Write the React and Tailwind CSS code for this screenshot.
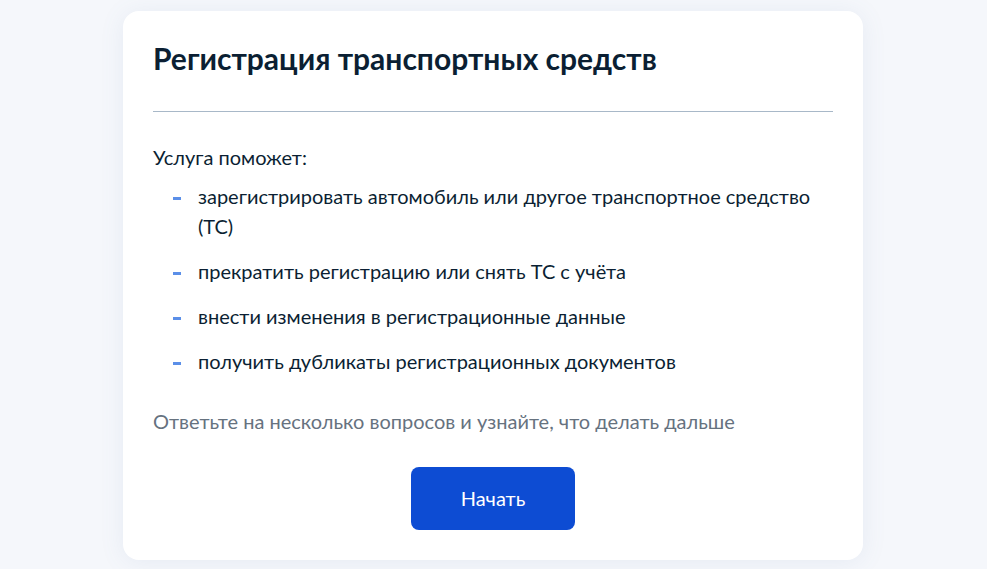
import React from 'react'

const items = [
  'зарегистрировать автомобиль или другое транспортное средство (ТС)',
  'прекратить регистрацию или снять ТС с учёта',
  'внести изменения в регистрационные данные',
  'получить дубликаты регистрационных документов',
]

export default function App(){
  return (
    <div className="min-h-screen bg-[#f5f7fb] pt-[11px] pb-[8px]" style={{ fontFamily: 'Lato, "Noto Sans", sans-serif' }}>
      <div className="ml-[123px] w-[740px] rounded-2xl bg-white px-[30px] pt-[29px] pb-[30px] shadow-[0_2px_24px_rgba(100,130,180,0.10)]">
        <h1 className="text-[30px] leading-[36px] font-bold text-[#0b1f33]">Регистрация транспортных средств</h1>
        <div className="mt-[35px] h-px bg-[#a8b8c8]" />
        <p className="mt-[30px] text-[20px] leading-[30px] text-[#0b1f33]">Услуга поможет:</p>
        <ul className="mt-[9px] flex flex-col gap-[15px]">
          {items.map(t => (
            <li key={t} className="flex text-[20px] leading-[30px] text-[#0b1f33]">
              <span className="ml-[20px] mt-[16px] h-[3px] w-[8px] shrink-0 bg-[#5b8fe8]" />
              <span className="ml-[17px]">{t}</span>
            </li>
          ))}
        </ul>
        <p className="mt-[30px] text-[20px] leading-[30px] text-[#66727f]">Ответьте на несколько вопросов и узнайте, что делать дальше</p>
        <div className="mt-[31px] flex justify-center">
          <button className="h-[63px] w-[164px] rounded-lg bg-[#0d4cd3] pb-[2px] text-[20px] text-white">Начать</button>
        </div>
      </div>
    </div>
  )
}
